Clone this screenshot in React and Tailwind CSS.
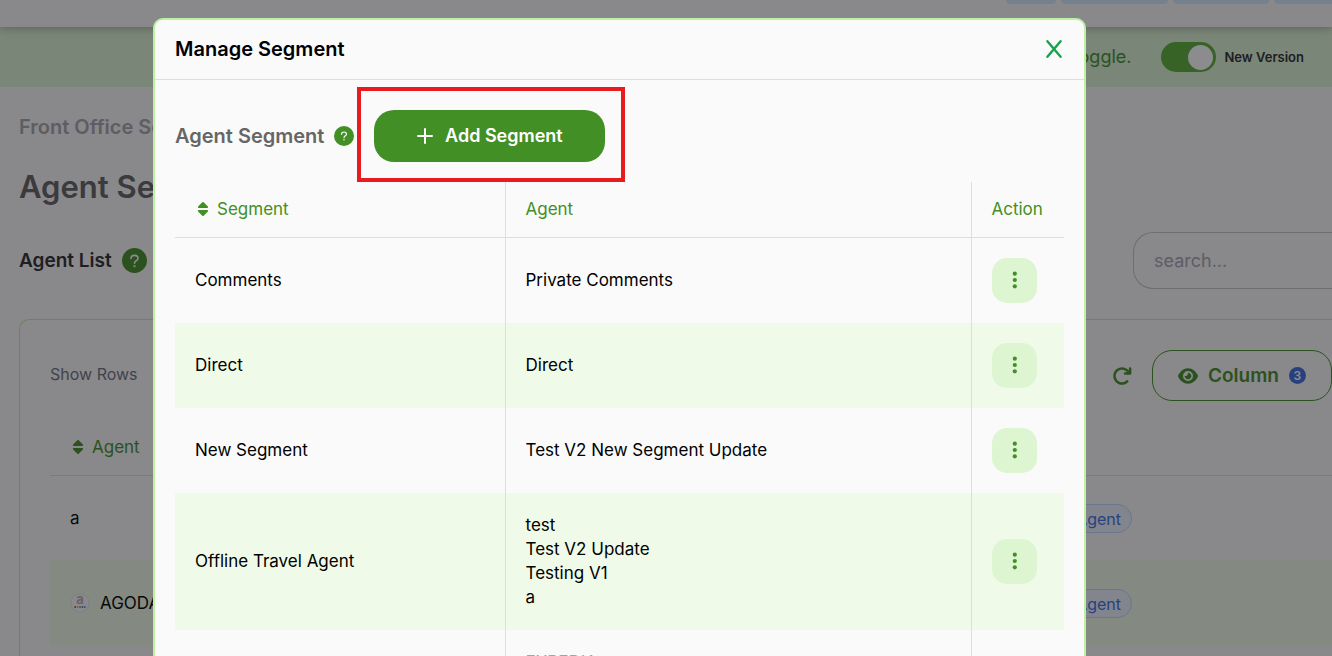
import React from 'react';
import { FaEye, FaArrowRotateRight } from 'react-icons/fa6';

const segments = [
  { name: 'Comments', agents: ['Private Comments'] },
  { name: 'Direct', agents: ['Direct'] },
  { name: 'New Segment', agents: ['Test V2 New Segment Update'] },
  { name: 'Offline Travel Agent', agents: ['test', 'Test V2 Update', 'Testing V1', 'a'] },
  { name: 'Online Travel Agent', agents: ['EXPEDIA', 'AGODA', 'Traveloka', 'Booking.com'], muted: true },
];

const agents = [
  { name: 'a', type: 'Travel Agent' },
  { name: 'AGODA', type: 'Travel Agent', logo: true },
];

const dotColors = ['#e2231a', '#f5a623', '#3fae49', '#8e44ad', '#2f80ed'];

function SortIcon() {
  return (
    <svg viewBox="0 0 12 16" className="h-4 w-3 shrink-0" fill="currentColor" aria-hidden="true">
      <path d="M5.3 1.3a1 1 0 0 1 1.4 0l4.2 4.3c.5.5.2 1.4-.6 1.4H1.7c-.8 0-1.1-.9-.6-1.4z" />
      <path d="M5.3 14.7a1 1 0 0 0 1.4 0l4.2-4.3c.5-.5.2-1.4-.6-1.4H1.7c-.8 0-1.1.9-.6 1.4z" />
    </svg>
  );
}

function QuestionMark({ className }) {
  return (
    <svg viewBox="0 0 12 16" className={className} fill="none" stroke="currentColor" strokeWidth="1.8" strokeLinecap="round" aria-hidden="true">
      <path d="M2 5.2C2 2.9 3.7 1.6 6 1.6s4 1.4 4 3.4c0 2.6-4 2.8-4 5.6" />
      <circle cx="6" cy="14" r="0.4" />
    </svg>
  );
}

function AgodaLogo() {
  return (
    <svg viewBox="0 0 20 20" className="h-5 w-5 shrink-0" aria-hidden="true">
      <circle cx="10" cy="10" r="9.2" fill="#fafafa" stroke="#d4d4d4" strokeWidth="0.5" />
      <text x="10" y="11" textAnchor="middle" fontSize="13" fontWeight="700" fill="#b0b0b0">a</text>
      {dotColors.map((color, idx) => (
        <circle key={color} cx={5.2 + idx * 2.4} cy="14" r="0.9" fill={color} />
      ))}
    </svg>
  );
}

function Page() {
  return (
    <div className="h-screen overflow-hidden bg-[#fafafa]">
      <header className="relative flex h-[27px] justify-end gap-[5px] bg-[#fafafa] shadow-[0_2px_8px_rgba(0,0,0,0.25)]">
        <div className="h-1 w-[50px] rounded-b bg-[#d3ecfb]" />
        <div className="h-1 w-[107px] rounded-b bg-[#d3ecfb]" />
        <div className="h-1 w-24 rounded-b bg-[#d3ecfb]" />
        <div className="h-1 w-[58px] rounded-bl bg-[#d3ecfb]" />
      </header>

      {/* Version banner */}
      <div className="flex h-[60px] items-center justify-end bg-[#dcf5d2] pr-7">
        <span className="text-lg text-[#429025]">Switch version using this toggle.</span>
        <label className="ml-[30px] flex items-center gap-2">
          <input type="checkbox" role="switch" defaultChecked className="peer sr-only" />
          <span className="flex h-[30px] w-[55px] items-center justify-end rounded-full bg-[#5ab036] pr-[3px]">
            <span className="h-[25px] w-[25px] rounded-full bg-white" />
          </span>
          <span className="text-[13px] font-semibold text-[#2a2a2a]">New Version</span>
        </label>
      </div>

      <main className="pl-[19px]">
        <p className="pt-[25px] text-xl leading-[30px] font-semibold text-[#a5a5ad]">Front Office Setup</p>
        <h1 className="mt-[25px] text-[31px] leading-10 font-semibold text-[#606060]">Agent Segment</h1>

        <div className="mt-[25px] flex h-[57px] items-center justify-between">
          <div className="flex items-center gap-[10px]">
            <h2 className="text-[19px] font-semibold text-[#2a2a2a]">Agent List</h2>
            <button aria-label="Agent list help" className="flex h-[25px] w-[25px] items-center justify-center rounded-full bg-[#429025] text-white">
              <QuestionMark className="h-[14px] w-[11px]" />
            </button>
          </div>
          <input
            aria-label="Search"
            placeholder="search..."
            className="h-[57px] w-[199px] rounded-l-[20px] border border-r-0 border-[#c4c4c8] pl-5 text-lg placeholder:text-[#a5a5ad]"
          />
        </div>

        <section className="mt-[30px] h-[400px] rounded-tl-[10px] border-t border-l border-[#c3ecac] pt-[30px] pl-[30px]">
          <div className="flex h-[51px] items-center justify-between">
            <span className="pb-1 text-base text-[#6b7280]">Show Rows</span>
            <div className="flex items-center gap-5">
              <button aria-label="Refresh" className="text-[#429025]">
                <FaArrowRotateRight className="h-5 w-5" />
              </button>
              <button className="flex h-[51px] w-[180px] items-center rounded-[20px] border border-[#429025] pl-[25px] text-[19px] font-semibold text-[#429025]">
                <FaEye className="h-5 w-5" />
                <span className="ml-[10px]">Column</span>
                <span className="ml-[10px] flex h-[17px] w-[17px] items-center justify-center rounded-full bg-[#3b6fe0] text-xs text-white">3</span>
              </button>
            </div>
          </div>

          <table className="mt-[18px] w-full text-left">
            <thead>
              <tr className="h-14 border-b border-[#dedede]">
                <th className="w-[860px] pl-[22px] font-normal text-[#429025]">
                  <button className="flex items-center gap-2 text-[17px]">
                    <SortIcon />
                    Agent
                  </button>
                </th>
                <th aria-label="Type" />
              </tr>
            </thead>
            <tbody>
              {agents.map((agent) => (
                <tr key={agent.name} className="h-[85px] even:bg-[#effbe8]">
                  <td className="pl-5 text-[17px]">
                    <div className="flex items-center gap-[10px]">
                      {agent.logo && <AgodaLogo />}
                      {agent.name}
                    </div>
                  </td>
                  <td className="pt-[2px] pr-[200px] text-right">
                    <span className="inline-flex h-[29px] items-center rounded-full border border-[#bcd6ff] bg-[#eef4ff] px-[10px] text-base whitespace-nowrap text-[#3b6fe0]">
                      {agent.type}
                    </span>
                  </td>
                </tr>
              ))}
            </tbody>
          </table>
        </section>
      </main>
    </div>
  );
}

function SegmentTable() {
  return (
    <table className="w-full table-fixed text-left text-[17px] leading-6 text-black">
      <thead>
        <tr className="h-[55px] border-b border-[#dedede] text-[#429025]">
          <th className="w-[330px] border-r border-[#dedede] pl-[22px] font-normal">
            <button className="flex items-center gap-2">
              <SortIcon />
              Segment
            </button>
          </th>
          <th className="border-r border-[#dedede] pl-5 font-normal">Agent</th>
          <th className="w-[93px] pl-5 font-normal">Action</th>
        </tr>
      </thead>
      <tbody>
        {segments.map((segment) => (
          <tr key={segment.name} className="even:bg-[#effbe8]">
            <td className="border-r border-[#dedede] pt-5 pb-[21px] pl-5">{segment.name}</td>
            <td className={`border-r border-[#dedede] pt-5 pb-[21px] pl-5 ${segment.muted ? 'text-[#a3a3a3]' : ''}`}>
              {segment.agents.map((agent) => (
                <p key={agent}>{agent}</p>
              ))}
            </td>
            <td className="py-5 pl-5">
              <button aria-label={`Actions for ${segment.name}`} className="flex h-[45px] w-[45px] items-center justify-center rounded-[15px] bg-[#ddf5d1] text-[#429025]">
                <svg viewBox="0 0 5 18" className="h-[18px] w-[5px]" fill="currentColor" aria-hidden="true">
                  <circle cx="2.8" cy="2.7" r="2.1" />
                  <circle cx="2.8" cy="9" r="2.1" />
                  <circle cx="2.8" cy="15.3" r="2.1" />
                </svg>
              </button>
            </td>
          </tr>
        ))}
      </tbody>
    </table>
  );
}

export default function App() {
  return (
    <div className="font-['Inter',sans-serif] text-base leading-6">
      <Page />

      {/* Overlay */}
      <div className="fixed inset-0 overflow-hidden bg-[rgba(20,18,24,0.49)] pt-[18px] pr-[246px] pl-[153px]">
        <div role="dialog" aria-modal="true" aria-labelledby="dialog-title" className="rounded-[10px] border-2 border-[#bdf0a2] bg-[#fafafa]">
          <div className="flex h-[60px] items-center justify-between border-b border-[#dedede] pr-[21px] pb-[2px] pl-5">
            <h2 id="dialog-title" className="text-xl font-semibold text-black">Manage Segment</h2>
            <button aria-label="Close" className="text-[#16a34a]">
              <svg viewBox="0 0 18 20" className="h-5 w-[18px]" fill="none" stroke="currentColor" strokeWidth="2.4" strokeLinecap="round" aria-hidden="true">
                <path d="M2.4 2.2 15.6 17.8M15.6 2.2 2.4 17.8" />
              </svg>
            </button>
          </div>

          <div className="px-5 pt-[30px]">
            <div className="mb-5 flex items-center">
              <h3 className="text-xl font-semibold text-[#666666]">Agent Segment</h3>
              <button aria-label="Agent segment help" className="ml-[10px] flex h-5 w-5 items-center justify-center rounded-full bg-[#429025] text-white">
                <QuestionMark className="h-[10px] w-2" />
              </button>
              <div className="relative ml-5">
                <button className="flex h-[52px] w-[231px] items-center justify-center gap-3 rounded-[20px] bg-[#429025] text-lg font-semibold text-white">
                  <svg viewBox="0 0 16 16" className="h-4 w-4" fill="none" stroke="currentColor" strokeWidth="2" strokeLinecap="round" aria-hidden="true">
                    <path d="M8 1v14M1 8h14" />
                  </svg>
                  Add Segment
                </button>
                <div className="pointer-events-none absolute -top-[23px] -right-5 -bottom-5 -left-[17px] border-4 border-[#e81c1f]" />
              </div>
            </div>

            <SegmentTable />
          </div>
        </div>
      </div>
    </div>
  );
}
